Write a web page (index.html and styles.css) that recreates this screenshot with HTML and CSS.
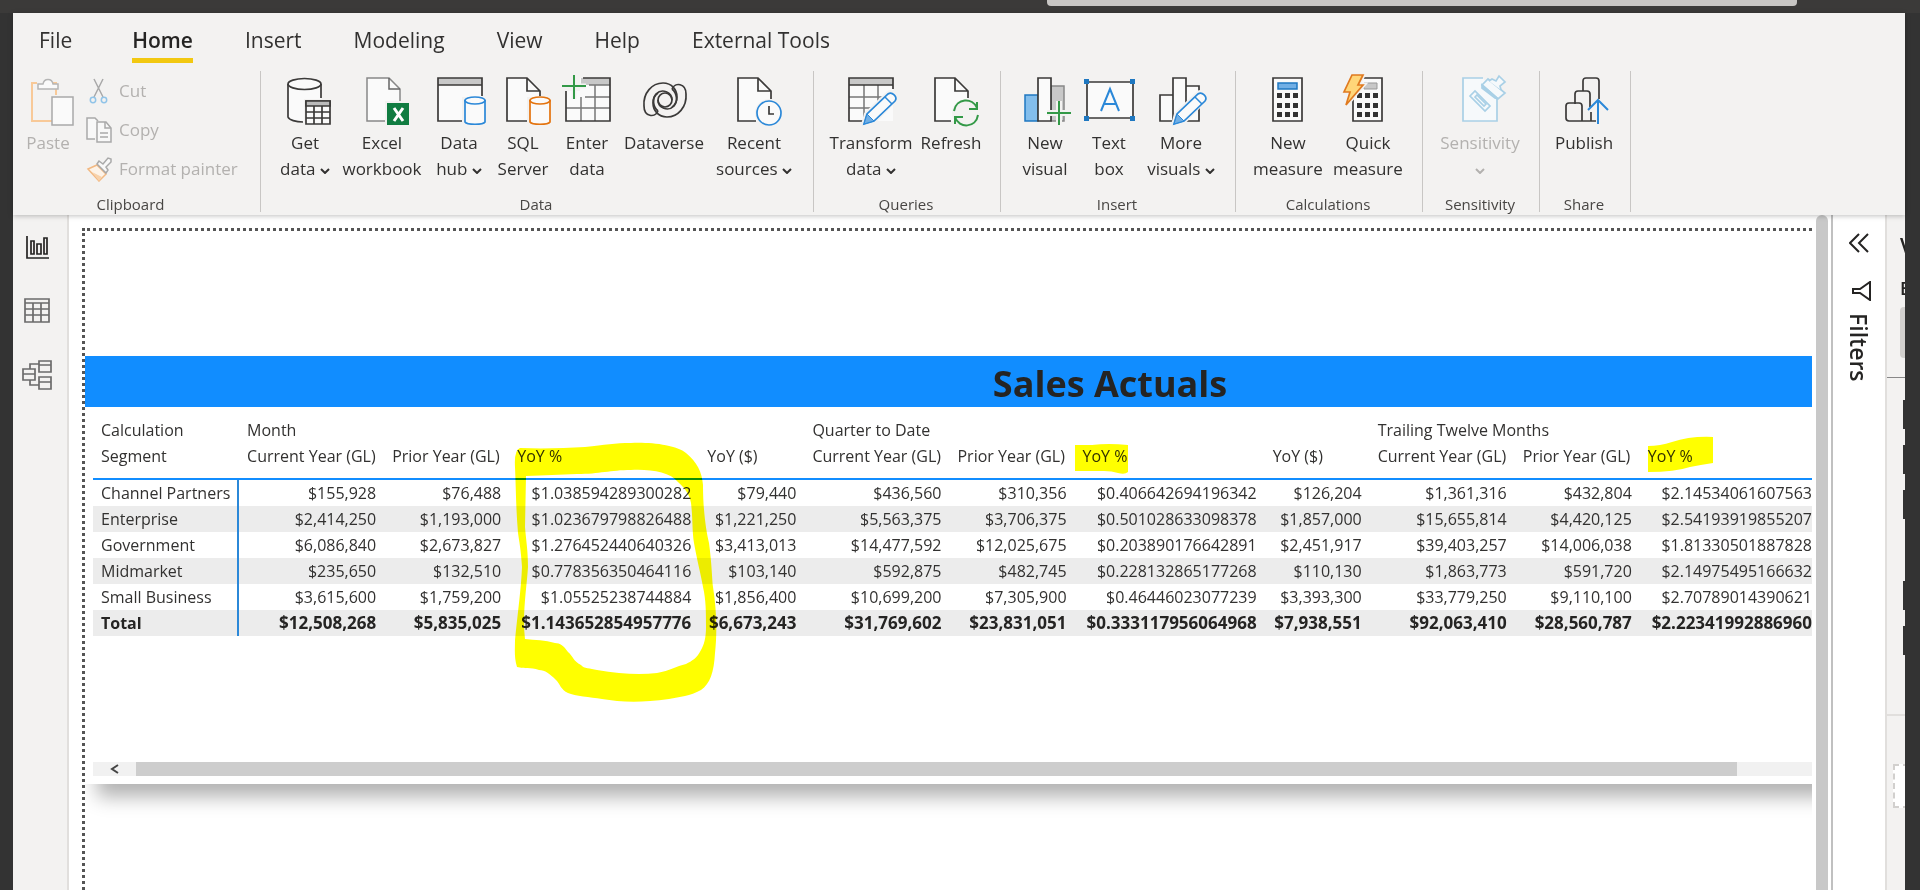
FILE: index.html
```html
<!DOCTYPE html>
<html lang="en">
<head>
    <meta charset="UTF-8">
    <meta name="viewport" content="width=device-width, initial-scale=1.0">
    <title>Sales Actuals</title>
    <link rel="stylesheet" href="styles.css">
</head>
<body>
    <div class="titlebar"><div class="search-box"></div></div>
    <div class="window">
        <header class="ribbon">
            <nav class="tabs">
                <a class="tab file" href="#">File</a>
                <a class="tab active" href="#">Home</a>
                <a class="tab" href="#">Insert</a>
                <a class="tab" href="#">Modeling</a>
                <a class="tab" href="#">View</a>
                <a class="tab" href="#">Help</a>
                <a class="tab" href="#">External Tools</a>
            </nav>
            <div class="groups">
                <section class="group clipboard">
                    <div class="group-items">
                        <button class="tool paste" disabled>
                            <svg class="icon" viewBox="0 0 48 48"><path d="M13 6H8v38h20M32 18V6h-5" fill="none" stroke="#f8c998" stroke-width="2"/><path d="M14 12V7h5c1-6 9-6 10 0h5v5z" fill="#fafafa" stroke="#b5b5b5" stroke-width="1.5"/><rect x="28" y="20" width="21" height="28" fill="#fafafa" stroke="#a9a9a9" stroke-width="1.5"/></svg>
                            <span>Paste</span>
                        </button>
                        <div class="small-tools">
                            <button class="small-tool" disabled>
                                <svg viewBox="0 0 26 26"><path d="M8 1l9 18M17 1L8 19" fill="none" stroke="#a9a9a9" stroke-width="1.5"/><g fill="none" stroke="#91c4e8" stroke-width="1.5"><circle cx="7" cy="22" r="2.7"/><circle cx="18" cy="22" r="2.7"/></g></svg>
                                Cut
                            </button>
                            <button class="small-tool" disabled>
                                <svg viewBox="0 0 26 26"><g fill="#f8f8f8" stroke="#a9a9a9" stroke-width="1.5"><path d="M9 22H1V1h8l3 3"/><path d="M11 5h9l5 6v14H11z"/><path d="M19 5v6h6M14 16h8M14 20h8" fill="none"/></g></svg>
                                Copy
                            </button>
                            <button class="small-tool" disabled>
                                <svg viewBox="0 0 26 26"><path d="M2 13l9-4 9 9-7 7z" fill="#fdf3e8" stroke="#f2b983" stroke-width="1.5"/><path d="M6 16l10 5-3 4z" fill="#f8d2ab"/><path d="M11 8l2-3 4 3 5-6 3 1v3l-5 5 2 3-2 3z" fill="#f8f8f8" stroke="#a9a9a9" stroke-width="1.5"/></svg>
                                Format painter
                            </button>
                        </div>
                    </div>
                    <div class="group-label">Clipboard</div>
                </section>

                <section class="group">
                    <div class="group-items">
                        <button class="tool">
                            <svg class="icon" viewBox="0 0 48 48"><path d="M7 7v33c1 3 8 5 16 5V22h17V7" fill="#fafafa"/><path d="M7 7v33c1 3 8 5 15 5M40 7v14" class="ln"/><ellipse cx="23.500" cy="7" rx="16.500" ry="5.500" class="ln fl"/><path d="M25 24h24v23H25z" class="ln fl"/><path d="M25 24h24v5H25z" fill="#bbb"/><path d="M25 24h24v5H25zM25 35h24M25 41h24M33 29v18M41 29v18" class="ln"/></svg>
                            <span>Get<br>data <svg class="chev" viewBox="0 0 10 6"><path d="M1 1l4 4 4-4"/></svg></span>
                        </button>
                        <button class="tool xl">
                            <svg class="icon" viewBox="0 0 48 48"><path d="M9 1h22l11 11v32H9z" class="fl" stroke="#888" stroke-width="1.5"/><path d="M31 1v11h11" fill="none" stroke="#666" stroke-width="1.5"/><path d="M27 24h24v24H27z" fill="#f3f2f1"/><rect x="29" y="26" width="22" height="22" fill="#107c41"/><path d="M36 31l9 13M45 31l-9 13" stroke="#fff" stroke-width="3"/></svg>
                            <span>Excel<br>workbook</span>
                        </button>
                        <button class="tool">
                            <svg class="icon" viewBox="0 0 48 48"><path d="M3 1h44v43H3z" class="fl"/><path d="M3 1h44v7H3z" fill="#c8c8c8"/><path d="M28 44H3V1h44v18M3 8h44" class="ln"/><path d="M27 20h24v27H27z" fill="#f3f2f1"/><path d="M30 23v22c2 3 18 3 20 0V23" class="fl" stroke="#2b88d8" stroke-width="1.700"/><ellipse cx="40" cy="23.500" rx="10" ry="3.500" class="fl" stroke="#2b88d8" stroke-width="1.700"/></svg>
                            <span>Data<br>hub <svg class="chev" viewBox="0 0 10 6"><path d="M1 1l4 4 4-4"/></svg></span>
                        </button>
                        <button class="tool">
                            <svg class="icon" viewBox="0 0 48 48"><path d="M8 1h20l13 13v30H8z" class="fl"/><path d="M28 44H8V1h20l13 13v5M28 1v13h13" class="ln"/><path d="M28 20h24v27H28z" fill="#f3f2f1"/><path d="M31 23v22c2 3 18 3 20 0V23" class="fl" stroke="#e3730e" stroke-width="1.700"/><ellipse cx="41" cy="23.500" rx="10" ry="3.500" class="fl" stroke="#e3730e" stroke-width="1.700"/></svg>
                            <span>SQL<br>Server</span>
                        </button>
                        <button class="tool">
                            <svg class="icon" viewBox="0 0 48 48"><path d="M3 14h14V1h30v43H3z" class="fl"/><path d="M18 1h29v7H18z" fill="#c8c8c8"/><path d="M18 20V44M32 8v36M3 31h44M22 20h25M26 8h21" fill="none" stroke="#777" stroke-width="1.500"/><path d="M20 1h27v43H3V14" class="ln"/><path d="M11-2v24M-1 9h24" fill="none" stroke="#f3f2f1" stroke-width="5"/><path d="M11-2v24M-1 9h24" fill="none" stroke="#339947" stroke-width="2"/></svg>
                            <span>Enter<br>data</span>
                        </button>
                        <button class="tool xl">
                            <svg class="icon" viewBox="0 0 48 48"><g class="ln"><circle cx="25" cy="23" r="7"/><path d="M18 34C15 41 4 40 4 29 3 16 12 6 23 6c9 0 14 7 14 14 0 5-2 8-5 10M18 34c-5-4-6-12-2-17 6-6 16-2 16 6"/><path d="M18 34C15 41 4 40 4 29 3 16 12 6 23 6c9 0 14 7 14 14 0 5-2 8-5 10M18 34c-5-4-6-12-2-17 6-6 16-2 16 6" transform="rotate(180 25 23)"/></g></svg>
                            <span>Dataverse</span>
                        </button>
                        <button class="tool xl">
                            <svg class="icon" viewBox="0 0 48 48"><path d="M8 1h20l13 13v30H8z" class="fl"/><path d="M26 44H8V1h20l13 13v8M28 1v13h13" class="ln"/><circle cx="39" cy="36" r="14" fill="#f3f2f1"/><circle cx="39" cy="36" r="12" class="fl" stroke="#2b88d8" stroke-width="1.700"/><path d="M39 29v8h5" class="ln"/></svg>
                            <span>Recent<br>sources <svg class="chev" viewBox="0 0 10 6"><path d="M1 1l4 4 4-4"/></svg></span>
                        </button>
                    </div>
                    <div class="group-label">Data</div>
                </section>

                <section class="group">
                    <div class="group-items">
                        <button class="tool xl">
                            <svg class="icon" viewBox="0 0 48 48"><path d="M2 1h44v43H2z" class="fl"/><path d="M2 1h44v7H2z" fill="#c8c8c8"/><path d="M17 8v36M31 8v28M2 20h34M2 31h24" fill="none" stroke="#777" stroke-width="1.500"/><path d="M46 12V1H2v43h14M2 8h44" class="ln"/><path d="M16 48l3-11 22-21c4-3 10 3 7 7L27 45z" fill="#f3f2f1" stroke="#f3f2f1" stroke-width="4"/><path d="M17 47l3-10 21-20c4-3 10 3 7 7L27 44z" class="fl" stroke="#2b88d8" stroke-width="1.700"/><path d="M17 47l3-10 7 7z" fill="#71afe5" stroke="#2b88d8"/><path d="M38 20l7 7" stroke="#2b88d8" stroke-width="1.500"/></svg>
                            <span>Transform<br>data <svg class="chev" viewBox="0 0 10 6"><path d="M1 1l4 4 4-4"/></svg></span>
                        </button>
                        <button class="tool m">
                            <svg class="icon" viewBox="0 0 48 48"><path d="M8 1h20l13 13v30H8z" class="fl"/><path d="M24 44H8V1h20l13 13v7M28 1v13h13" class="ln"/><circle cx="39" cy="36" r="14" fill="#f3f2f1"/><path d="M27 34c2-13 19-14 23-3M50 25v7h-8M51 38c-2 13-19 14-23 2M28 47v-7h8" fill="none" stroke="#339947" stroke-width="2"/></svg>
                            <span>Refresh</span>
                        </button>
                    </div>
                    <div class="group-label">Queries</div>
                </section>

                <section class="group">
                    <div class="group-items">
                        <button class="tool">
                            <svg class="icon" viewBox="0 0 48 48"><path d="M30 9h13v35H30z" fill="#c8c8c8" stroke="#888" stroke-width="1.500"/><path d="M4 18h13v26H4z" fill="#83beec" stroke="#1f78c1" stroke-width="1.500"/><path d="M17 1h13v43H17z" class="ln fl"/><path d="M38 24v24M26 36h24" stroke="#f3f2f1" stroke-width="6"/><path d="M38 24v24M26 36h24" stroke="#339947" stroke-width="2"/></svg>
                            <span>New<br>visual</span>
                        </button>
                        <button class="tool">
                            <svg class="icon" viewBox="0 0 48 48"><path d="M2 5h46v36H2z" class="ln fl"/><path d="M-1 2h5v5h-5zM45 2h5v5h-5zM-1 39h5v5h-5zM45 39h5v5h-5z" fill="#1f78c1"/><path d="M16 34l9-22 9 22M19 27h12" fill="none" stroke="#2b88d8" stroke-width="2"/></svg>
                            <span>Text<br>box</span>
                        </button>
                        <button class="tool l">
                            <svg class="icon" viewBox="0 0 48 48"><path d="M3 18h13v26H3zM29 9h13v35H29zM16 1h13v43H16z" class="ln fl"/><path d="M16 48l3-11 22-21c4-3 10 3 7 7L27 45z" fill="#f3f2f1" stroke="#f3f2f1" stroke-width="4"/><path d="M17 47l3-10 21-20c4-3 10 3 7 7L27 44z" class="fl" stroke="#2b88d8" stroke-width="1.700"/><path d="M17 47l3-10 7 7z" fill="#71afe5" stroke="#2b88d8"/><path d="M38 20l7 7" stroke="#2b88d8" stroke-width="1.500"/></svg>
                            <span>More<br>visuals <svg class="chev" viewBox="0 0 10 6"><path d="M1 1l4 4 4-4"/></svg></span>
                        </button>
                    </div>
                    <div class="group-label">Insert</div>
                </section>

                <section class="group">
                    <div class="group-items">
                        <button class="tool l">
                            <svg class="icon" viewBox="0 0 48 48"><path d="M9 1h29v43H9z" class="ln fl"/><path d="M14 6h19v6H14z" fill="#71afe5" stroke="#1f78c1" stroke-width="1.500"/><path d="M13 16h5v5h-5zM21 16h5v5h-5zM29 16h5v5h-5zM13 26h5v5h-5zM21 26h5v5h-5zM29 26h5v5h-5zM13 35h5v5h-5zM21 35h5v5h-5zM29 35h5v5h-5z" fill="#333"/></svg>
                            <span>New<br>measure</span>
                        </button>
                        <button class="tool l">
                            <svg class="icon" viewBox="0 0 48 48"><path d="M9 1h29v43H9z" class="ln fl"/><path d="M20 6h13v6H20z" fill="#c8c8c8" stroke="#999"/><path d="M13 16h5v5h-5zM21 16h5v5h-5zM29 16h5v5h-5zM13 26h5v5h-5zM21 26h5v5h-5zM29 26h5v5h-5zM13 35h5v5h-5zM21 35h5v5h-5zM29 35h5v5h-5z" fill="#333"/><path d="M8-2h11l-5 10h5L2 28l4-13H0z" fill="#f3f2f1" stroke="#f3f2f1" stroke-width="5"/><path d="M8-2h11l-5 10h5L2 28l4-13H0z" fill="#ffd679" stroke="#e07a1f" stroke-width="1.700"/></svg>
                            <span>Quick<br>measure</span>
                        </button>
                    </div>
                    <div class="group-label">Calculations</div>
                </section>

                <section class="group">
                    <div class="group-items">
                        <button class="tool xl" disabled>
                            <svg class="icon" viewBox="0 0 48 48"><g fill="#f6f9fb" stroke="#a9d0e6" stroke-width="1.700"><path d="M27 1H7v43h34V22"/><path d="M14 19l5-5 15 15-5 5z"/><path d="M19 20l2-2 9 9-2 2z"/><path d="M26 8l6-6 17 14-7 6z"/><path d="M26 8l16 14-3-1-13-10z" fill="#a9d0e6"/><path d="M33 4l3-2 4 2 3-5 6 6-5 4 1 4"/></g></svg>
                            <span>Sensitivity<br><svg class="chev" viewBox="0 0 10 6"><path d="M1 1l4 4 4-4"/></svg></span>
                        </button>
                    </div>
                    <div class="group-label">Sensitivity</div>
                </section>

                <section class="group">
                    <div class="group-items">
                        <button class="tool">
                            <svg class="icon" viewBox="0 0 48 48"><path d="M23 14V4q0-3 3-3h10q3 0 3 3v18M15 27V17q0-3 3-3h9q3 0 3 3v13M31 35v9M36 44H9q-3 0-3-3V29q0-3 3-3h10q3 0 3 3v15" class="ln"/><path d="M38 47V24M28 33l10-10 10 10" fill="none" stroke="#2b88d8" stroke-width="2"/></svg>
                            <span>Publish</span>
                        </button>
                    </div>
                    <div class="group-label">Share</div>
                </section>
            </div>
        </header>

        <div class="workspace">
            <nav class="view-nav">
                <button class="view" aria-label="Report view"><svg viewBox="0 0 30 30" stroke="#252423"><path d="M5 4v22h22M9 9h3v13H9zM15 12h4v10h-4zM22 6h3v16h-3z"/></svg></button>
                <button class="view" aria-label="Data view"><svg viewBox="0 0 30 30" stroke="#6b6b6b"><path d="M3 3h24v23H3zM3 7h24M3 13h24M3 19h24M11 7v19M19 7v19"/></svg></button>
                <button class="view" aria-label="Model view"><svg viewBox="0 0 30 30" stroke="#6b6b6b"><path d="M17 1h12v11H17zM17 5h12M1 9h12v11H1zM1 14h12M17 17h12v12H17zM17 22h12M8 9V4h9M8 20v5h9"/></svg></button>
            </nav>

            <main class="canvas">
                <div class="report-page">
                    <div class="visual">
                        <h1 class="visual-title">Sales Actuals</h1>
                        <table class="matrix">
                            <colgroup>
                                <col class="c-seg">
                                <col class="c-cur"><col class="c-prior"><col class="c-pct"><col class="c-diff">
                                <col class="c-cur"><col class="c-prior"><col class="c-pct"><col class="c-diff">
                                <col class="c-cur"><col class="c-prior"><col class="c-last">
                            </colgroup>
                            <thead>
                                <tr><th>Calculation</th><th colspan="4">Month</th><th colspan="4">Quarter to Date</th><th colspan="3">Trailing Twelve Months</th></tr>
                                <tr><th>Segment</th><th>Current Year (GL)</th><th>Prior Year (GL)</th><th>YoY %</th><th>YoY ($)</th><th>Current Year (GL)</th><th>Prior Year (GL)</th><th>YoY %</th><th>YoY ($)</th><th>Current Year (GL)</th><th>Prior Year (GL)</th><th>YoY %</th></tr>
                            </thead>
                            <tbody>
                                <tr><th>Channel Partners</th><td>$155,928</td><td>$76,488</td><td>$1.038594289300282</td><td>$79,440</td><td>$436,560</td><td>$310,356</td><td>$0.406642694196342</td><td>$126,204</td><td>$1,361,316</td><td>$432,804</td><td>$2.14534061607563</td></tr>
                                <tr><th>Enterprise</th><td>$2,414,250</td><td>$1,193,000</td><td>$1.023679798826488</td><td>$1,221,250</td><td>$5,563,375</td><td>$3,706,375</td><td>$0.501028633098378</td><td>$1,857,000</td><td>$15,655,814</td><td>$4,420,125</td><td>$2.54193919855207</td></tr>
                                <tr><th>Government</th><td>$6,086,840</td><td>$2,673,827</td><td>$1.276452440640326</td><td>$3,413,013</td><td>$14,477,592</td><td>$12,025,675</td><td>$0.203890176642891</td><td>$2,451,917</td><td>$39,403,257</td><td>$14,006,038</td><td>$1.81330501887828</td></tr>
                                <tr><th>Midmarket</th><td>$235,650</td><td>$132,510</td><td>$0.778356350464116</td><td>$103,140</td><td>$592,875</td><td>$482,745</td><td>$0.228132865177268</td><td>$110,130</td><td>$1,863,773</td><td>$591,720</td><td>$2.14975495166632</td></tr>
                                <tr><th>Small Business</th><td>$3,615,600</td><td>$1,759,200</td><td>$1.05525238744884</td><td>$1,856,400</td><td>$10,699,200</td><td>$7,305,900</td><td>$0.46446023077239</td><td>$3,393,300</td><td>$33,779,250</td><td>$9,110,100</td><td>$2.70789014390621</td></tr>
                                <tr class="total"><th>Total</th><td>$12,508,268</td><td>$5,835,025</td><td>$1.143652854957776</td><td>$6,673,243</td><td>$31,769,602</td><td>$23,831,051</td><td>$0.333117956064968</td><td>$7,938,551</td><td>$92,063,410</td><td>$28,560,787</td><td>$2.22341992886960</td></tr>
                            </tbody>
                        </table>
                        <div class="hscroll">
                            <button class="hscroll-arrow" aria-label="Scroll left"><svg viewBox="0 0 10 10"><path d="M8 1L2 5l6 4"/></svg></button>
                            <div class="hscroll-thumb"></div>
                        </div>
                        <!-- highlighter strokes -->
                        <svg class="marker" viewBox="85 356 1728 428">
                            <path fill-rule="evenodd" d="M520 448C545 449 565 448 585 447C605 445 615 443 631 443C650 442 677 445 686 453C697 462 702 472 703 485C703 510 706 530 709 543C712 565 712 580 713 587C717 612 717 635 715 653C714 672 710 684 701 690C690 696 680 697 669 699C640 703 620 702 602 699C590 697 575 696 568 693C561 690 560 684 556 680C550 674 545 670 539 670C530 667 525 669 517 667C514 657 515 650 515 640C518 610 521 590 522 567C521 550 519 540 518 533C516 510 516 490 515 467Q514 450 520 448ZM526 476C545 475 560 475 577 474C600 474 610 470 631 470C650 469 670 472 678 482C687 490 690 497 691 503C693 520 692 530 694 543C697 560 701 575 703 587C706 600 706 612 706 627C706 638 704 645 701 650C697 658 692 661 686 664C676 666 670 671 657 673C640 675 620 674 597 670C590 668 584 669 581 665C573 661 573 656 568 652C564 646 560 643 555 643C545 640 535 640 525 639C522 615 527 585 528 567C528 550 526 540 525 527Z"/>
                            <path d="M1075 445L1092 445Q1108 443 1128 445V472Q1125 475 1118 473Q1112 471 1104 471H1075Z"/>
                            <path d="M1648 446Q1660 446 1672 442Q1690 436 1713 437V463Q1700 465 1690 467Q1675 472 1648 472Z"/>
                        </svg>
                    </div>
                </div>
                <div class="vscroll"></div>
            </main>

            <aside class="filters">
                <button class="pane-btn" aria-label="Expand filters"><svg viewBox="0 0 20 20"><path d="M10 1L1 10l9 9M19 1l-9 9 9 9"/></svg></button>
                <svg class="funnel" viewBox="0 0 20 20"><path d="M19 1v18L9 12H2V8h7z"/></svg>
                <span class="filters-label">Filters</span>
            </aside>

            <aside class="viz-pane">
                <div class="viz-title">V</div>
                <div class="viz-build">B</div>
                <div class="viz-tile"></div>
                <div class="viz-icons"><i></i><i></i><i></i><i class="gap"></i><i></i></div>
                <div class="viz-fields"></div>
            </aside>
        </div>
    </div>
</body>
</html>
```
FILE: styles.css
```css
* {
    box-sizing: border-box;
}
body {
    margin: 0;
    height: 100vh;
    display: flex;
    flex-direction: column;
    overflow: hidden;
    background-color: #333;
    color: #323130;
    font-family: "Open Sans", "Noto Sans", sans-serif;
}
button {
    padding: 0;
    border: none;
    background: none;
    color: inherit;
    font-family: inherit;
}
.titlebar {
    flex: none;
    height: 13px;
    padding: 0 123px 0 1047px;
    background-color: #3b3a39;
}
.search-box {
    height: 6px;
    background-color: #c8c6c4;
    border-radius: 0 0 4px 4px;
}
.window {
    flex: 1;
    min-height: 0;
    margin: 0 15px 0 13px;
    display: flex;
    flex-direction: column;
    background-color: #fff;
}

/* ribbon */
.ribbon {
    flex: none;
    height: 202px;
    background-color: #f3f2f1;
    box-shadow: 0 1px 5px rgba(0, 0, 0, 0.25);
    z-index: 1;
}
.tabs {
    display: flex;
    gap: 52px;
    padding: 8px 0 0 26px;
}
.tab {
    height: 42px;
    color: #323130;
    font-size: 21px;
    line-height: 38px;
    text-decoration: none;
}
.tab.file {
    margin-right: 8px;
}
.tab.active {
    color: #252423;
    font-weight: 600;
    border-bottom: 5px solid #f2c811;
}
.groups {
    display: flex;
    margin-top: 8px;
}
.group {
    height: 141px;
    padding: 0 14px 0 12px;
    display: flex;
    flex-direction: column;
    justify-content: space-between;
    border-right: 1px solid #c8c6c4;
}
.group.clipboard {
    width: 248px;
    padding: 0;
}
.group-items {
    display: flex;
    align-items: flex-start;
}
.group-label {
    font-size: 15px;
    line-height: 16px;
    text-align: center;
    color: #484644;
}
.clipboard .group-label {
    padding-right: 12px;
}
.tool {
    width: 64px;
    padding-top: 6px;
    display: flex;
    flex-direction: column;
    align-items: center;
    gap: 5px;
    font-size: 17px;
    line-height: 26px;
    white-space: nowrap;
}
.tool.m {
    width: 70px;
}
.tool.l {
    width: 80px;
}
.tool.xl {
    width: 90px;
}
.tool.paste {
    width: 70px;
}
.tool:disabled,
.small-tool:disabled {
    color: #b3b1af;
}
.icon {
    width: 48px;
    height: 48px;
    overflow: visible;
}
.ln {
    fill: none;
    stroke: #3b3a39;
    stroke-width: 1.7;
}
.fl {
    fill: #fafafa;
}
.chev {
    width: 10px;
    height: 6px;
    vertical-align: 1px;
    fill: none;
    stroke: currentColor;
    stroke-width: 2;
}
.small-tools {
    display: flex;
    flex-direction: column;
}
.small-tool {
    height: 39px;
    padding-left: 3px;
    display: flex;
    align-items: center;
    gap: 7px;
    font-size: 17px;
}
.small-tool svg {
    width: 26px;
    height: 26px;
}

/* work area */
.workspace {
    flex: 1;
    min-height: 0;
    display: flex;
}
.view-nav {
    width: 56px;
    padding: 17px 15px 17px 9px;
    display: flex;
    flex-direction: column;
    gap: 34px;
    background-color: #f3f2f1;
    border-right: 2px solid #e1dfdd;
}
.view {
    height: 30px;
}
.view svg {
    width: 30px;
    height: 30px;
    fill: none;
    stroke-width: 1.7;
}
.canvas {
    flex: 1;
    min-width: 0;
    display: flex;
    gap: 4px;
    padding-left: 13px;
}
.report-page {
    flex: 1;
    min-width: 0;
    margin-top: 13px;
    padding-top: 125px;
    overflow: hidden;
    border-top: 3px dotted #555;
    border-left: 3px dotted #555;
}
.visual {
    position: relative;
    height: 428px;
    display: flex;
    flex-direction: column;
    margin-right: -40px;
    padding-right: 40px;
    background-color: #fff;
    box-shadow: 10px 15px 18px -2px rgba(0, 0, 0, 0.3);
}
.visual-title {
    flex: none;
    margin: 0 -40px 0 0;
    padding: 0 40px 0 323px;
    height: 51px;
    background-color: #118dff;
    color: #252423;
    font-size: 36px;
    font-weight: 700;
    line-height: 56px;
    text-align: center;
}
.matrix {
    width: calc(100% - 8px);
    margin: 10px 0 0 8px;
    table-layout: fixed;
    border-collapse: separate;
    border-spacing: 0;
    font-size: 16px;
    line-height: 24px;
    white-space: nowrap;
}
.c-seg {
    width: 146px;
}
.c-cur {
    width: 145px;
}
.c-prior {
    width: 125px;
}
.c-pct {
    width: 190px;
}
.c-diff {
    width: 105px;
}
.c-last {
    width: 172px;
}
.matrix th,
.matrix td {
    height: 26px;
    padding: 0 8px;
}
.matrix th {
    font-weight: 400;
    text-align: left;
}
.matrix td {
    text-align: right;
}
.matrix td:last-child {
    padding-right: 0;
}
.matrix thead tr:last-child th {
    height: 37px;
    padding-bottom: 9px;
    border-bottom: 2px solid #118dff;
}
.matrix tbody th {
    border-right: 2px solid #2b88d8;
}
.matrix tbody tr:nth-child(even) > * {
    background-color: #ececec;
}
.matrix .total th {
    font-weight: 700;
}
.matrix .total td {
    font-size: 17px;
    font-weight: 700;
}
.matrix .total {
    color: #252423;
}
.hscroll {
    height: 14px;
    margin: auto 0 8px 8px;
    display: flex;
    background-color: #f1f1f1;
}
.hscroll-arrow {
    width: 43px;
    display: flex;
    align-items: center;
    justify-content: center;
}
.hscroll-arrow svg {
    width: 10px;
    height: 10px;
    fill: none;
    stroke: #444;
    stroke-width: 2;
}
.hscroll-thumb {
    flex: 1;
    margin-right: 75px;
    background-color: #cdcdcd;
}
.marker {
    position: absolute;
    top: 0;
    left: 0;
    width: 1728px;
    height: 428px;
    fill: #ff0;
    mix-blend-mode: multiply;
    pointer-events: none;
}
.vscroll {
    width: 12px;
    margin-right: 3px;
    background-color: #c8c8c8;
    border-radius: 6px 6px 0 0;
}

/* right panes */
.filters {
    width: 54px;
    padding-top: 18px;
    display: flex;
    flex-direction: column;
    align-items: center;
    border-left: 2px solid #c0c0c0;
}
.pane-btn {
    height: 20px;
}
.pane-btn svg,
.funnel {
    display: block;
    width: 20px;
    height: 20px;
    fill: none;
    stroke: #252423;
    stroke-width: 2;
}
.funnel {
    margin: 28px 0 12px 4px;
}
.filters-label {
    font-size: 23px;
    font-weight: 600;
    line-height: 28px;
    color: #252423;
    writing-mode: vertical-rl;
}
.viz-pane {
    width: 20px;
    overflow: hidden;
    background-color: #f3f2f1;
    border-left: 2px solid #e1dfdd;
}
.viz-title,
.viz-build {
    padding-left: 13px;
    color: #252423;
    font-weight: 600;
}
.viz-title {
    margin-top: 16px;
    font-size: 21px;
    line-height: 30px;
}
.viz-build {
    margin-top: 17px;
    font-size: 18px;
    line-height: 20px;
}
.viz-tile {
    height: 71px;
    margin-top: 9px;
    border-bottom: 1px solid #888;
}
.viz-tile::before {
    content: "";
    display: block;
    height: 51px;
    margin-left: 13px;
    background-color: #d2d0ce;
    border-radius: 4px 0 0 4px;
}
.viz-icons {
    height: 338px;
    padding: 22px 0 0 16px;
    display: flex;
    flex-direction: column;
    gap: 16px;
    border-bottom: 2px solid #e1dfdd;
}
.viz-icons i {
    height: 29px;
    background-color: #333;
}
.viz-icons .gap {
    margin-top: 46px;
}
.viz-fields {
    height: 44px;
    margin: 48px -4px 0 6px;
    background-color: #fff;
    border: 2px dashed #d2d0ce;
}
```
